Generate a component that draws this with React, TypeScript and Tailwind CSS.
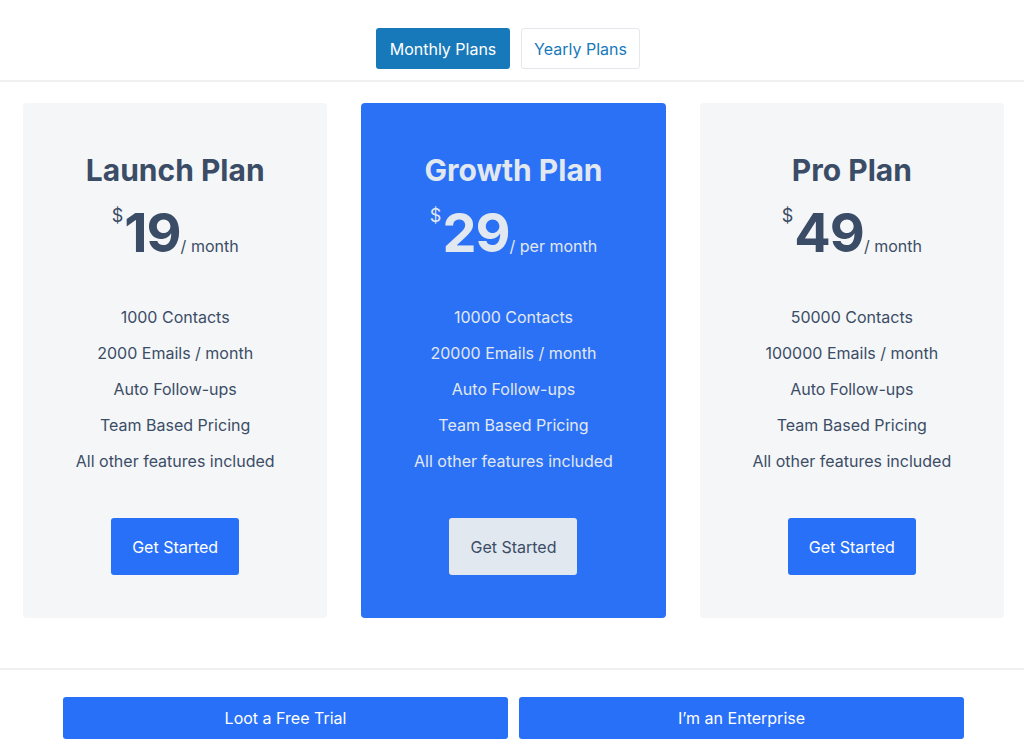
import React from "react";

type Plan = {
  name: string;
  price: string;
  unit: string;
  features: string[];
  featured?: boolean;
};

const plans: Plan[] = [
  {
    name: "Launch Plan",
    price: "19",
    unit: "/ month",
    features: ["1000 Contacts", "2000 Emails / month", "Auto Follow-ups", "Team Based Pricing", "All other features included"],
  },
  {
    name: "Growth Plan",
    price: "29",
    unit: "/ per month",
    featured: true,
    features: ["10000 Contacts", "20000 Emails / month", "Auto Follow-ups", "Team Based Pricing", "All other features included"],
  },
  {
    name: "Pro Plan",
    price: "49",
    unit: "/ month",
    features: ["50000 Contacts", "100000 Emails / month", "Auto Follow-ups", "Team Based Pricing", "All other features included"],
  },
];

function PlanCard({ plan }: { plan: Plan }) {
  const text = plan.featured ? "text-[#e2e8f0]" : "text-[#3b4d66]";

  return (
    <div
      className={`flex-1 rounded-[4px] pt-[49px] pb-[43px] flex flex-col items-center ${
        plan.featured ? "bg-[#2a71f6]" : "bg-[#f5f6f8]"
      } ${text}`}
    >
      <h3 className="text-[30px] leading-[36px] font-bold">{plan.name}</h3>

      {/* price */}
      <div className="mt-[17px] flex items-baseline">
        <span className="text-[18px] leading-none self-start mt-[2px] mr-[1px]">$</span>
        <span className="text-[54px] leading-[56px] font-bold tracking-[-1px]">{plan.price}</span>
        <span className="text-[16px] leading-none">{plan.unit}</span>
      </div>

      <ul className="mt-[44px] flex flex-col items-center gap-[12px] text-[16px] leading-[24px]">
        {plan.features.map((f) => (
          <li key={f}>{f}</li>
        ))}
      </ul>

      <button
        className={`mt-[45px] w-[128px] h-[57px] rounded-[3px] text-[16px] ${
          plan.featured ? "bg-[#e2e8f0] text-[#3b4d66]" : "bg-[#2870f8] text-white"
        }`}
      >
        Get Started
      </button>
    </div>
  );
}

export default function App() {
  return (
    <div className="min-h-[747px] bg-white font-['Inter',sans-serif]">
      {/* billing toggle */}
      <div className="flex justify-center gap-[11px] pt-[28px] pb-[11px] pr-[8px] border-b-2 border-[#eef0f2]">
        <button className="h-[41px] w-[134px] rounded-[3px] bg-[#1779ba] text-white text-[16px]">
          Monthly Plans
        </button>
        <button className="h-[41px] w-[119px] rounded-[3px] bg-white border border-[#e4e7eb] text-[#1779ba] text-[16px]">
          Yearly Plans
        </button>
      </div>

      <div className="flex gap-[34px] pl-[23px] pr-[20px] pt-[21px] pb-[50px] border-b-2 border-[#eef0f2]">
        {plans.map((p) => (
          <PlanCard key={p.name} plan={p} />
        ))}
      </div>

      <div className="flex gap-[11px] pl-[63px] pr-[60px] pt-[27px]">
        <button className="flex-1 h-[42px] rounded-[3px] bg-[#2870f8] text-white text-[16px]">
          Loot a Free Trial
        </button>
        <button className="flex-1 h-[42px] rounded-[3px] bg-[#2870f8] text-white text-[16px]">
          I’m an Enterprise
        </button>
      </div>
    </div>
  );
}
